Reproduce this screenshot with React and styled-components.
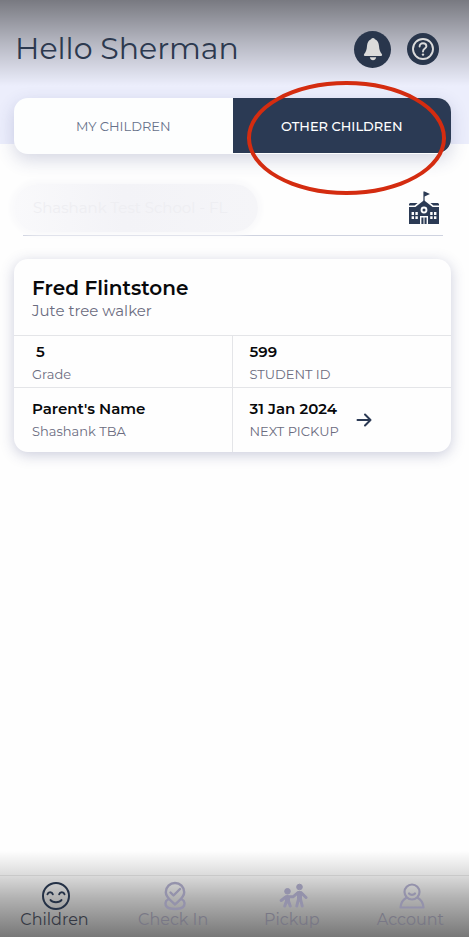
import React, { useState } from "react";
import styled, { createGlobalStyle } from "styled-components";

const navy = "#2b3a54";
const muted = "#6b6c80";
const line = "#e4e5e8";

const GlobalStyle = createGlobalStyle`
  *, *::before, *::after { box-sizing: border-box; }
  body { margin: 0; background: #fefefe; }
  button { font: inherit; border: 0; padding: 0; background: none; cursor: pointer; }
  h1, h2, p, dl, dt, dd { margin: 0; font-weight: inherit; }
  svg { display: block; flex: none; }
`;

const Page = styled.div`
  position: relative;
  display: flex;
  flex-direction: column;
  min-height: 100vh;
  font-family: Montserrat, Inter, sans-serif;
  color: ${navy};
  background: linear-gradient(#eceefc 144px, #fefefe 144px);
`;

const Shade = styled.div`
  position: absolute;
  left: 0;
  right: 0;
  height: 86px;
  pointer-events: none;
  ${(p) => (p.$edge === "top" ? "top: 0;" : "bottom: 0;")}
  background: linear-gradient(
    to ${(p) => (p.$edge === "top" ? "bottom" : "top")},
    rgba(0, 0, 0, ${(p) => (p.$edge === "top" ? 0.49 : 0.53)}),
    ${(p) => (p.$edge === "top" ? "rgba(0, 0, 0, 0.23) 50%" : "rgba(0, 0, 0, 0.3) 45%, rgba(0, 0, 0, 0.15) 70%")},
    transparent
  );
`;

const Header = styled.header`
  position: relative;
  display: flex;
  align-items: center;
  height: 98px;
  padding: 0 30px 0 15px;
`;

const Greeting = styled.h1`
  flex: 1;
  font-size: 30px;
  font-weight: 400;
  line-height: 40px;
  color: #2c394f;
`;

const HeaderActions = styled.div`
  display: flex;
  align-items: center;
  gap: 16px;
`;

const RoundButton = styled.button`
  display: grid;
  place-items: center;
  width: ${(p) => p.$size}px;
  height: ${(p) => p.$size}px;
  border-radius: 50%;
  background: #29364c;
  color: #dbdbdb;
`;

const Tabs = styled.div`
  display: grid;
  grid-template-columns: 1fr 1fr;
  height: 56px;
  margin: 0 18px 0 14px;
  border-radius: 14px;
  background: #fdfefe;
  box-shadow: 0 6px 18px rgba(50, 60, 120, 0.2);
`;

const TabCell = styled.div`
  position: relative;
  display: grid;
  padding-bottom: 1px;
`;

const Tab = styled.button`
  font-size: 13px;
  line-height: 16px;
  font-weight: ${(p) => (p.$active ? 500 : 400)};
  color: ${(p) => (p.$active ? "#ffffff" : "#66718a")};
  background: ${(p) => (p.$active ? navy : "transparent")};
  border-radius: ${(p) => (p.$side === "right" ? "0 14px 14px 0" : "14px 0 0 14px")};
`;

const Marker = styled.span`
  position: absolute;
  z-index: 2;
  top: -17px;
  left: 14px;
  right: 5px;
  height: 114px;
  border: 4px solid #d42c10;
  border-radius: 50%;
  pointer-events: none;
`;

const SchoolPicker = styled.button`
  display: flex;
  align-items: center;
  justify-content: space-between;
  height: 56px;
  margin: 26px 26px 0 23px;
  padding: 0 3px 0 0;
  border-bottom: 1px solid #cfd3e0;
  color: ${navy};
`;

const SchoolName = styled.span`
  width: 244px;
  height: 48px;
  margin-left: -9px;
  padding-left: 19px;
  border-radius: 24px;
  background: linear-gradient(90deg, #f9f9fb, #f3f3f7 45%, #f5f5f8);
  box-shadow: 0 0 6px 3px #f8f8fa;
  color: #eeeef2;
  font-size: 15px;
  line-height: 48px;
  text-align: left;
`;

const Card = styled.article`
  margin: 23px 18px 0 14px;
  border-radius: 14px;
  background: #fefefe;
  box-shadow: 0 3px 14px rgba(50, 60, 120, 0.25);
`;

const CardHead = styled.div`
  height: 76px;
  padding: 17px 18px 0;
`;

const ChildName = styled.h2`
  font-size: 20px;
  line-height: 24px;
  font-weight: 600;
  color: #08090b;
`;

const ChildNote = styled.p`
  font-size: 15px;
  line-height: 22px;
  color: ${muted};
`;

const Facts = styled.dl`
  display: grid;
  grid-template-columns: 1fr 1fr;
`;

const Fact = styled.div`
  display: flex;
  align-items: center;
  gap: 17px;
  padding: ${(p) => (p.$last ? "10px" : "5px")} 17px ${(p) => (p.$last ? "10px" : "2px")} ${(p) => (p.$divided ? 18 : 17)}px;
  border-top: 1px solid ${line};
  border-right: ${(p) => (p.$divided ? `1px solid ${line}` : "0")};
`;

const FactText = styled.div`
  display: flex;
  flex-direction: column-reverse;
`;

const FactLabel = styled.dt`
  font-size: 13px;
  line-height: 22px;
  color: ${muted};
`;

const FactValue = styled.dd`
  font-size: 15px;
  line-height: 22px;
  font-weight: 600;
  color: #08090b;
  padding-left: ${(p) => (p.$inset ? 4 : 0)}px;
`;

const ArrowButton = styled.button`
  color: ${navy};
`;

const BottomNav = styled.nav`
  position: relative;
  display: flex;
  justify-content: space-between;
  height: 62px;
  margin-top: auto;
  padding: 0 7px 0 6px;
  border-top: 1px solid #c9c9c9;
`;

const NavLink = styled.a`
  display: flex;
  flex-direction: column;
  align-items: center;
  width: 100px;
  padding-top: 5px;
  font-size: 16px;
  line-height: 20px;
  text-decoration: none;
  white-space: nowrap;
  color: ${(p) => (p.$active ? "#243146" : "#9492ab")};
`;

const NavText = styled.span`
  margin-top: -1px;
  margin-right: 3px;
  color: ${(p) => (p.$active ? "#343843" : "#797886")};
`;

function BellIcon() {
  return (
    <svg width="20" height="24" viewBox="0 0 20 24" fill="currentColor" aria-hidden="true">
      <path d="M10 1C8.700 1 8.300 2.100 7.600 2.600C5.300 3.800 4.300 6 4 9C3.700 13 2.800 15 1.200 17C.5 18.200 1 19 2 19H18C19 19 19.500 18.200 18.800 17C17.200 15 16.300 13 16 9C15.700 6 14.700 3.800 12.400 2.600C11.700 2.100 11.300 1 10 1Z" />
      <path d="M6.800 20.300H13.200C12.800 22.200 11.600 23.200 10 23.200S7.200 22.200 6.800 20.300Z" />
    </svg>
  );
}

function HelpIcon() {
  return (
    <svg width="24" height="24" viewBox="0 0 24 24" fill="none" stroke="currentColor" strokeWidth="1.900" aria-hidden="true">
      <circle cx="12" cy="12" r="10" />
      <path d="M8.600 9.600C8.600 7.400 10 6.300 12 6.300S15.400 7.500 15.400 9.300C15.400 11.600 12 11.700 12 14.500" strokeLinecap="round" />
      <circle cx="12" cy="17.600" r="1.200" fill="currentColor" stroke="none" />
    </svg>
  );
}

function SchoolIcon() {
  return (
    <svg width="32" height="36" viewBox="0 0 32 36" fill="currentColor" aria-hidden="true">
      <path d="M15.400 1.500H16.600L22 4L16.600 6.500V11H15.400Z" />
      <path d="M2 13H9.600L6.600 15.600H1V14ZM30 13H22.400L25.400 15.600H31V14Z" />
      <path
        fillRule="evenodd"
        d="M16 10.300L24.600 17H31V34H20V26H12V34H1V17H7.400ZM16 16.600A3.400 3.400 0 1 0 16 23.400A3.400 3.400 0 1 0 16 16.600ZM3.600 22V25H6V22ZM7.400 22V25H9.800V22ZM3.600 26.200V29H6V26.200ZM7.400 26.200V29H9.800V26.200ZM22.200 22V25H24.600V22ZM26 22V25H28.400V22ZM22.200 26.200V29H24.600V26.200ZM26 26.200V29H28.400V26.200Z"
      />
      <circle cx="16" cy="20" r="1.500" />
      <path d="M13.400 27.500H15.500V34H13.400ZM16.500 27.500H18.600V34H16.500Z" />
    </svg>
  );
}

function ArrowIcon() {
  return (
    <svg width="16" height="16" viewBox="0 0 16 16" fill="none" stroke="currentColor" strokeWidth="2" strokeLinecap="round" strokeLinejoin="round" aria-hidden="true">
      <path d="M1.500 8H14.500M9 2.500L14.500 8L9 13.500" />
    </svg>
  );
}

function SmileIcon() {
  return (
    <svg width="30" height="30" viewBox="0 0 30 30" fill="none" stroke="currentColor" strokeWidth="2" strokeLinecap="round" aria-hidden="true">
      <circle cx="15" cy="15" r="13" />
      <path d="M6.500 13.200C7.300 10.600 11 10.600 11.800 13.200M18.200 13.200C19 10.600 22.700 10.600 23.500 13.200M9.500 19C11.500 22 18.500 22 20.500 19" />
    </svg>
  );
}

function CheckInIcon() {
  return (
    <svg width="30" height="30" viewBox="0 0 30 30" fill="none" stroke="currentColor" strokeWidth="2.400" strokeLinecap="round" strokeLinejoin="round" aria-hidden="true">
      <path d="M15 23.500C12 20 5.800 17 5.800 11.200A9.200 9.200 0 0 1 24.200 11.200C24.200 17 18 20 15 23.500Z" />
      <path d="M10.500 11.500L13.500 14.500L20 8M8 18.500C4.800 20 4.800 24 7 26C10 28.600 20 28.600 23 26C25.200 24 25.200 20 22 18.500" />
    </svg>
  );
}

function PickupIcon() {
  return (
    <svg width="30" height="30" viewBox="0 0 30 30" fill="currentColor" stroke="currentColor" aria-hidden="true">
      <circle cx="9.500" cy="10.300" r="2.800" />
      <circle cx="21.500" cy="6" r="2.800" />
      <path d="M9.500 16.500V20M21.500 12.500V18" strokeWidth="5" strokeLinecap="round" />
      <path fill="none" strokeWidth="3" strokeLinecap="round" strokeLinejoin="round" d="M8 15.800L3.200 19.500M11 15.800L15 15.800L20 11.700M23 11.700L28 16.500M8.500 20L6.800 25M10.500 20L12.200 25M20.500 18L18.800 25M22.500 18L24.200 25" />
    </svg>
  );
}

function AccountIcon() {
  return (
    <svg width="30" height="30" viewBox="0 0 30 30" fill="none" stroke="currentColor" strokeWidth="2.200" strokeLinecap="round" strokeLinejoin="round" aria-hidden="true">
      <circle cx="15" cy="11" r="7.500" />
      <path d="M12 12.500C13.500 14.300 16.500 14.300 18 12.500M9.500 16.800C6 18.500 4 22 3.500 26.500H26.500C26 22 24 18.500 20.500 16.800" />
    </svg>
  );
}

const facts = [
  { label: "Grade", value: "5", inset: true },
  { label: "STUDENT ID", value: "599" },
  { label: "Parent's Name", value: "Shashank TBA", swap: true },
  { label: "NEXT PICKUP", value: "31 Jan 2024", arrow: true },
];

const navItems = [
  { label: "Children", Icon: SmileIcon },
  { label: "Check In", Icon: CheckInIcon },
  { label: "Pickup", Icon: PickupIcon },
  { label: "Account", Icon: AccountIcon },
];

export default function App() {
  const [tab, setTab] = useState("other");
  return (
    <Page>
      <GlobalStyle />
      <Shade $edge="top" />
      <Shade $edge="bottom" />
      <Header>
        <Greeting>Hello Sherman</Greeting>
        <HeaderActions>
          <RoundButton $size={37} aria-label="Notifications"><BellIcon /></RoundButton>
          <RoundButton $size={32} aria-label="Help"><HelpIcon /></RoundButton>
        </HeaderActions>
      </Header>
      <Tabs role="tablist">
        <TabCell>
          <Tab role="tab" $side="left" $active={tab === "mine"} aria-selected={tab === "mine"} onClick={() => setTab("mine")}>
            MY CHILDREN
          </Tab>
        </TabCell>
        <TabCell>
          <Tab role="tab" $side="right" $active={tab === "other"} aria-selected={tab === "other"} onClick={() => setTab("other")}>
            OTHER CHILDREN
          </Tab>
          <Marker />
        </TabCell>
      </Tabs>
      <SchoolPicker>
        <SchoolName>Shashank Test School - FL</SchoolName>
        <SchoolIcon />
      </SchoolPicker>
      <Card>
        <CardHead>
          <ChildName>Fred Flintstone</ChildName>
          <ChildNote>Jute tree walker</ChildNote>
        </CardHead>
        <Facts>
          {facts.map(({ label, value, inset, swap, arrow }, i) => (
            <Fact key={label} $divided={i % 2 === 0} $last={i > 1}>
              <FactText>
                <FactLabel as={swap ? "dd" : "dt"}>{swap ? value : label}</FactLabel>
                <FactValue as={swap ? "dt" : "dd"} $inset={inset}>{swap ? label : value}</FactValue>
              </FactText>
              {arrow && <ArrowButton aria-label="Show next pickup"><ArrowIcon /></ArrowButton>}
            </Fact>
          ))}
        </Facts>
      </Card>
      <BottomNav>
        {navItems.map(({ label, Icon }, i) => (
          <NavLink key={label} href="#" $active={i === 0} aria-current={i === 0 ? "page" : undefined}>
            <Icon />
            <NavText $active={i === 0}>{label}</NavText>
          </NavLink>
        ))}
      </BottomNav>
    </Page>
  );
}
